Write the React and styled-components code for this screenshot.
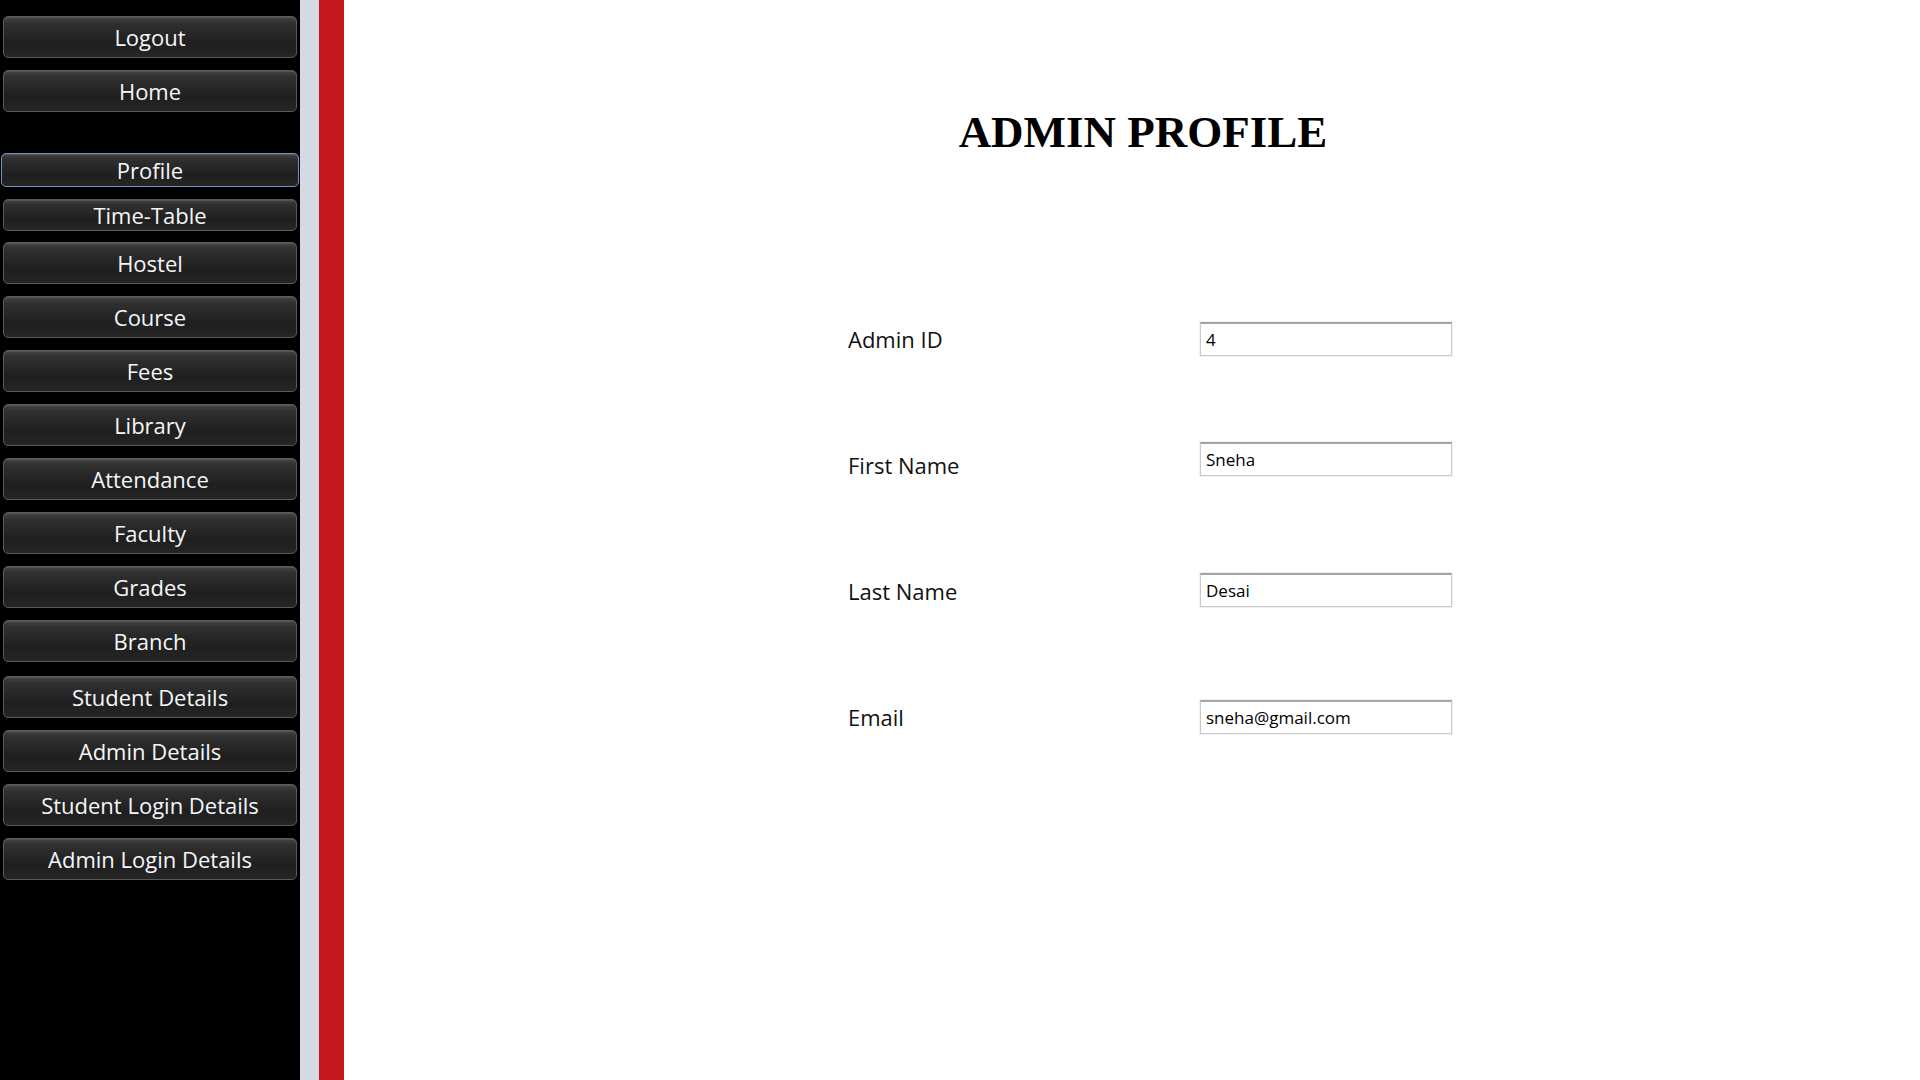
import React from 'react'
import styled, { createGlobalStyle } from 'styled-components'

const GlobalStyle = createGlobalStyle`
  html, body {
    margin: 0;
    padding: 0;
    background: #ffffff;
  }
  #root {
    height: 1080px;
  }
`

const Page = styled.div`
  display: flex;
  width: 1920px;
  height: 1080px;
  overflow: hidden;
  font-family: "Open Sans", "Noto Sans", sans-serif;
`

const Sidebar = styled.nav`
  width: 300px;
  flex-shrink: 0;
  background: #000;
  display: flex;
  flex-direction: column;
  align-items: center;
  padding-top: 16px;
  box-sizing: border-box;
`

const NavButton = styled.button`
  width: ${p => (p.$active ? '298px' : '294px')};
  height: ${p => p.$h}px;
  margin-top: ${p => p.$mt}px;
  flex-shrink: 0;
  box-sizing: border-box;
  border: 1px solid ${p => (p.$active ? '#6f93c4' : '#5a5a5a')};
  border-radius: 5px;
  background: linear-gradient(to bottom, #454545 0%, #303030 15%, #1f1f1f 65%, #262626 100%);
  box-shadow: inset 0 1px 0 rgba(255, 255, 255, 0.1);
  color: #f4f6f8;
  font-family: "Open Sans", "Noto Sans", sans-serif;
  font-size: 22px;
  padding: 0;
  cursor: pointer;
`

const Stripe = styled.div`
  width: ${p => p.$w}px;
  flex-shrink: 0;
  background: ${p => p.$color};
`

const Main = styled.main`
  flex: 1;
  background: #fff;
  padding-top: 110px;
  box-sizing: border-box;
`

const Title = styled.h1`
  margin: 0 0 0 22px;
  text-align: center;
  font-family: "Liberation Serif", "Times New Roman", serif;
  font-weight: bold;
  font-size: 45px;
  line-height: 1;
  color: #000;
`

const Form = styled.div`
  display: grid;
  grid-template-columns: 352px 252px;
  grid-auto-rows: 34px;
  row-gap: 92px;
  align-items: center;
  margin-top: 167px;
  margin-left: 504px;
`

const Label = styled.label`
  font-family: "Open Sans", "Noto Sans", sans-serif;
  font-size: 22px;
  color: #111;
`

const Field = styled.input`
  width: 252px;
  height: 34px;
  box-sizing: border-box;
  margin-bottom: ${p => p.$raise * 2}px;
  border: 1px solid #cacaca;
  border-top: 2px solid #a4a4a4;
  box-shadow: 0 0 0 1px #f0f0f0;
  background: #fff;
  padding: 0 5px;
  font-family: "Open Sans", "Noto Sans", sans-serif;
  font-size: 17px;
  color: #000;
  outline: none;
`

const navItems = [
  { label: 'Logout', h: 42, mt: 0 },
  { label: 'Home', h: 42, mt: 12 },
  { label: 'Profile', h: 34, mt: 41, active: true },
  { label: 'Time-Table', h: 32, mt: 12 },
  { label: 'Hostel', h: 42, mt: 11 },
  { label: 'Course', h: 42, mt: 12 },
  { label: 'Fees', h: 42, mt: 12 },
  { label: 'Library', h: 42, mt: 12 },
  { label: 'Attendance', h: 42, mt: 12 },
  { label: 'Faculty', h: 42, mt: 12 },
  { label: 'Grades', h: 42, mt: 12 },
  { label: 'Branch', h: 42, mt: 12 },
  { label: 'Student Details', h: 42, mt: 14 },
  { label: 'Admin Details', h: 42, mt: 12 },
  { label: 'Student Login Details', h: 42, mt: 12 },
  { label: 'Admin Login Details', h: 42, mt: 12 },
]

const fields = [
  { label: 'Admin ID', value: '4', raise: 0 },
  { label: 'First Name', value: 'Sneha', raise: 6 },
  { label: 'Last Name', value: 'Desai', raise: 1 },
  { label: 'Email', value: 'sneha@gmail.com', raise: 0 },
]

const App = () => {
  return (
    <Page>
      <GlobalStyle />
      <Sidebar>
        {navItems.map(item => (
          <NavButton key={item.label} $h={item.h} $mt={item.mt} $active={item.active}>
            {item.label}
          </NavButton>
        ))}
      </Sidebar>
      <Stripe $w={19} $color="#d5d9e1" />
      <Stripe $w={25} $color="#c4161d" />
      <Main>
        <Title>ADMIN PROFILE</Title>
        <Form>
          {fields.map(f => (
            <React.Fragment key={f.label}>
              <Label>{f.label}</Label>
              <Field type="text" defaultValue={f.value} $raise={f.raise} readOnly />
            </React.Fragment>
          ))}
        </Form>
      </Main>
    </Page>
  )
}

export default App
